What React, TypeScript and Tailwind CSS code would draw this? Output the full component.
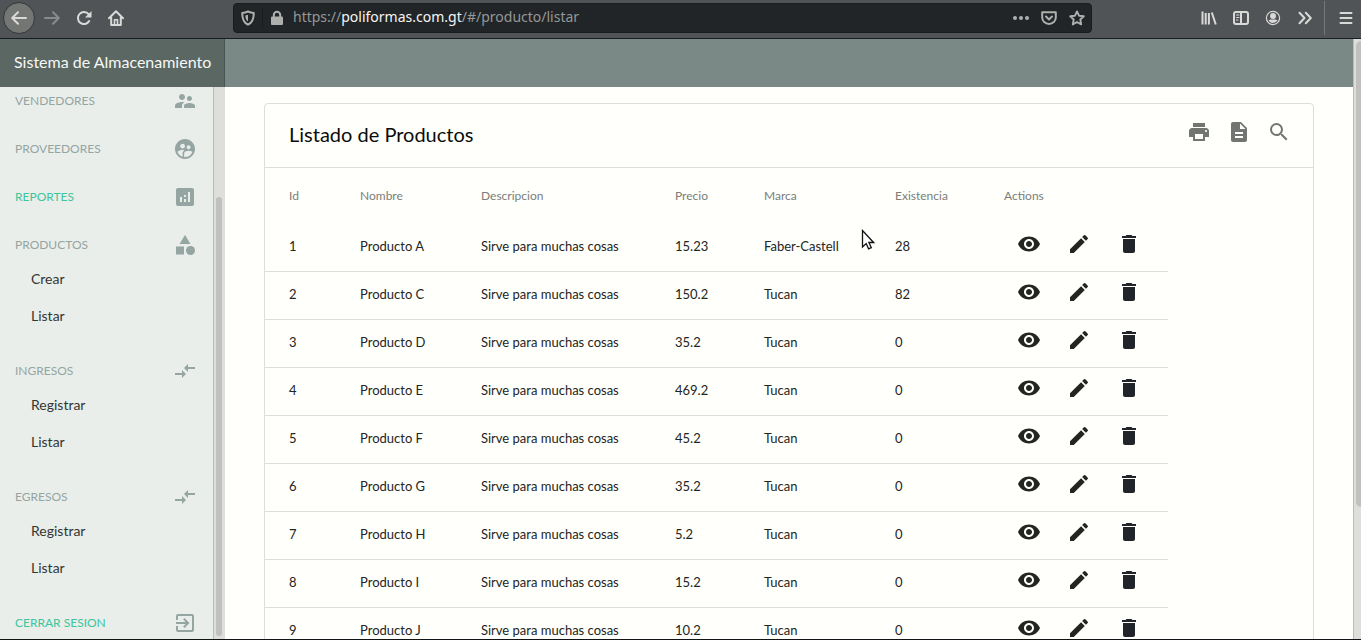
import React from "react";
import type { ComponentType, ReactNode } from "react";
import {
  MdAnalytics,
  MdCategory,
  MdCompareArrows,
  MdCreate,
  MdDelete,
  MdDescription,
  MdExitToApp,
  MdPrint,
  MdSearch,
  MdSupervisedUserCircle,
  MdSupervisorAccount,
  MdVisibility,
} from "react-icons/md";

type Icon = ComponentType<{ className?: string }>;

type Section = { title: string; icon: Icon; active?: boolean; links?: string[] };

const sections: Section[] = [
  { title: "VENDEDORES", icon: MdSupervisorAccount },
  { title: "PROVEEDORES", icon: MdSupervisedUserCircle },
  { title: "REPORTES", icon: MdAnalytics, active: true },
  { title: "PRODUCTOS", icon: MdCategory, links: ["Crear", "Listar"] },
  { title: "INGRESOS", icon: MdCompareArrows, links: ["Registrar", "Listar"] },
  { title: "EGRESOS", icon: MdCompareArrows, links: ["Registrar", "Listar"] },
  { title: "CERRAR SESION", icon: MdExitToApp, active: true },
];

type Product = { id: number; name: string; price: string; brand: string; stock: number };

const products: Product[] = [
  { id: 1, name: "Producto A", price: "15.23", brand: "Faber-Castell", stock: 28 },
  { id: 2, name: "Producto C", price: "150.2", brand: "Tucan", stock: 82 },
  { id: 3, name: "Producto D", price: "35.2", brand: "Tucan", stock: 0 },
  { id: 4, name: "Producto E", price: "469.2", brand: "Tucan", stock: 0 },
  { id: 5, name: "Producto F", price: "45.2", brand: "Tucan", stock: 0 },
  { id: 6, name: "Producto G", price: "35.2", brand: "Tucan", stock: 0 },
  { id: 7, name: "Producto H", price: "5.2", brand: "Tucan", stock: 0 },
  { id: 8, name: "Producto I", price: "15.2", brand: "Tucan", stock: 0 },
  { id: 9, name: "Producto J", price: "10.2", brand: "Tucan", stock: 0 },
];

const columns = [
  { label: "Id", width: "w-[71px]" },
  { label: "Nombre", width: "w-[121px]" },
  { label: "Descripcion", width: "w-[194px]" },
  { label: "Precio", width: "w-[89px]" },
  { label: "Marca", width: "w-[131px]" },
  { label: "Existencia", width: "w-[109px]" },
  { label: "Actions", width: "w-[188px]" },
];

function Glyph({ children, className = "" }: { children: ReactNode; className?: string }) {
  return (
    <svg
      viewBox="0 0 16 16"
      className={`size-4 shrink-0 ${className}`}
      fill="none"
      stroke="currentColor"
      strokeWidth="2"
      strokeLinecap="round"
      strokeLinejoin="round"
      aria-hidden="true"
    >
      {children}
    </svg>
  );
}

function BarButton({
  label,
  children,
  size = "size-8",
  className = "",
}: {
  label: string;
  children: ReactNode;
  size?: string;
  className?: string;
}) {
  return (
    <button
      type="button"
      aria-label={label}
      className={`flex shrink-0 items-center justify-center ${size} ${className}`}
    >
      {children}
    </button>
  );
}

function BrowserBar() {
  return (
    <div className="flex h-[39px] shrink-0 items-center border-b border-[#1b1e20] bg-[#505457] pb-[2px] pl-[3px] text-[#d9dad7]">
      <BarButton label="Atrás" className="rounded-full border border-[#333638] bg-[#737673]">
        <Glyph>
          <path d="M15 8H1.5M7 2.2 1.2 8 7 13.8" />
        </Glyph>
      </BarButton>
      <BarButton label="Adelante" className="ml-px text-[#888b8b]">
        <Glyph>
          <path d="M1 8h13.5M9 2.2 14.8 8 9 13.8" />
        </Glyph>
      </BarButton>
      <BarButton label="Recargar">
        <Glyph>
          <path d="M13.2 11A6 6 0 1 1 12.6 4.2" />
          <path d="M15.500 1v6.500H9z" fill="currentColor" stroke="none" />
        </Glyph>
      </BarButton>
      <BarButton label="Inicio">
        <Glyph>
          <path d="M1 8.2 8 1.3l7 6.9M3.2 7.5V15h9.6V7.5" />
          <path d="M6.5 15V9.8h3V15" strokeWidth="1.6" />
        </Glyph>
      </BarButton>

      <div className="ml-[101px] flex h-[30px] min-w-0 flex-1 items-center rounded border border-[#1a1d1f] bg-[#212528] text-[#aeb0ae]">
        <Glyph className="ml-[6px]">
          <path d="M8 1.5c2 .9 3.9 1.3 5.8 1.4 0 6-1 9.6-5.8 11.8C3.200 12.500 2.200 8.900 2.200 2.900 4.100 2.800 6 2.400 8 1.500z" />
          <path d="M8 4.700v6.800c-1.700-1.300-2.500-3.200-2.700-6.100z" fill="currentColor" stroke="none" />
        </Glyph>
        <span className="mx-[6px] h-5 w-px bg-[#1a1d1f]" />
        <Glyph>
          <rect x="2" y="6.500" width="12" height="8.500" rx="1" fill="currentColor" stroke="none" />
          <path d="M4.800 8V5a3.200 3.200 0 0 1 6.400 0v3" />
        </Glyph>
        <div className="relative ml-2 min-w-0 flex-1 pb-[2px]">
          <input
            type="text"
            aria-label="Dirección"
            className="absolute inset-0 w-full bg-transparent outline-none"
          />
          <span className="pointer-events-none block truncate font-['Noto_Sans',sans-serif] text-sm leading-5 text-[#959896]">
            https://<span className="text-[#f4f5f2]">poliformas.com.gt</span>/#/producto/listar
          </span>
        </div>
        <button type="button" aria-label="Más acciones" className="mr-3">
          <Glyph>
            <g fill="currentColor" stroke="none">
              <circle cx="2" cy="8" r="2" />
              <circle cx="8" cy="8" r="2" />
              <circle cx="14" cy="8" r="2" />
            </g>
          </Glyph>
        </button>
        <button type="button" aria-label="Guardar en Pocket" className="mr-3">
          <Glyph>
            <path d="M1.200 2.200h13.600v5.300a6.800 6.400 0 0 1-13.600 0zM5 6.500l3 3 3-3" />
          </Glyph>
        </button>
        <button type="button" aria-label="Marcador" className="mr-[6px]">
          <Glyph>
            <path d="m8 1.400 2 4.300 4.800.6-3.500 3.200.9 4.900L8 12l-4.200 2.400.9-4.900L1.200 6.300 6 5.700z" strokeWidth="1.900" />
          </Glyph>
        </button>
      </div>

      <BarButton label="Biblioteca" className="ml-[101px]">
        <Glyph>
          <path d="M1.500 1.500v13M4.700 3v11.500M7.900 3v11.500M10.800 2.500l4 12" strokeLinecap="butt" />
        </Glyph>
      </BarButton>
      <BarButton label="Barra lateral">
        <Glyph>
          <rect x="1" y="2" width="14" height="12" rx="2" />
          <path d="M8 2v12" />
          <path d="M3.500 5h2.500M3.500 7.500h2.500M3.500 10h1.500" strokeWidth="1" />
        </Glyph>
      </BarButton>
      <BarButton label="Cuenta">
        <Glyph>
          <circle cx="8" cy="8" r="6.600" strokeWidth="1.200" />
          <circle cx="8" cy="6" r="3" fill="currentColor" stroke="none" />
          <path d="M3.500 10.200c1.300 0 1.800-.7 2.500-.7h4c.7 0 1.200.7 2.500.7a5 5 0 0 1-9 0z" fill="currentColor" stroke="none" />
        </Glyph>
      </BarButton>
      <BarButton label="Más herramientas">
        <Glyph>
          <path d="M2.500 2.800 7.500 8l-5 5.200M8.800 2.800l5 5.200-5 5.200" />
        </Glyph>
      </BarButton>
      <span className="ml-[3px] h-[34px] w-px bg-[#74787a]" />
      <BarButton label="Menú" size="h-8 w-[30px]" className="ml-[6px]">
        <Glyph>
          <path d="M2.500 3h11M2.500 8h11M2.500 13h11" />
        </Glyph>
      </BarButton>
    </div>
  );
}

function Sidebar() {
  return (
    <aside className="flex w-[225px] shrink-0 bg-[#e9eeeb]">
      <nav className="flex min-w-0 flex-1 flex-col justify-end overflow-hidden">
        {sections.map(({ title, icon: SectionIcon, active, links }, i) => (
          <div
            key={title}
            className={`shrink-0 ${links ? "mb-5" : i < sections.length - 1 ? "mb-4" : ""}`}
          >
            <a
              href="#/"
              className={`flex h-8 items-center justify-between pr-4 pl-[15px] text-xs ${active ? "text-[#3dc59b]" : "text-[#95a5a2]"}`}
            >
              {title}
              <SectionIcon className="size-6 text-[#95a5a2]" />
            </a>
            {links?.map((link) => (
              <a key={link} href="#/" className="flex h-[37px] items-center pb-[2px] pl-[31px] text-sm text-[#333633]">
                {link}
              </a>
            ))}
          </div>
        ))}
      </nav>
      <div className="flex w-3 flex-col border-l border-[#b9bbb8] bg-[#dededb] pb-[3px] pl-[2px]">
        <div className="mt-auto h-4/5 w-[6px] rounded-full bg-[#c0c1bf]" />
      </div>
    </aside>
  );
}

function ActionButton({ label, icon: ActionIcon, className = "" }: { label: string; icon: Icon; className?: string }) {
  return (
    <button type="button" aria-label={label} className={`flex w-[50px] justify-center ${className}`}>
      <ActionIcon className="size-6" />
    </button>
  );
}

const cell = "border-b border-[#dcdedb] pl-6";

function ProductTable() {
  return (
    <table className="w-[903px] table-fixed border-separate border-spacing-0 text-left">
      <thead>
        <tr className="h-14">
          {columns.map((c) => (
            <th key={c.label} className={`${c.width} pl-6 text-xs font-normal text-[#7b7d7a]`}>
              {c.label}
            </th>
          ))}
        </tr>
      </thead>
      <tbody className="text-[13px] leading-5 text-[#232522]">
        {products.map((p) => (
          <tr key={p.id} className="h-12">
            <td className={`${cell} pb-[3px]`}>{p.id}</td>
            <td className={`${cell} pb-[3px]`}>{p.name}</td>
            <td className={`${cell} pb-[3px]`}>Sirve para muchas cosas</td>
            <td className={`${cell} pb-[3px]`}>{p.price}</td>
            <td className={`${cell} pb-[3px]`}>{p.brand}</td>
            <td className={`${cell} pb-[3px]`}>{p.stock}</td>
            <td className={`${cell} pb-[7px]`}>
              <div className="flex">
                <ActionButton label="Ver" icon={MdVisibility} />
                <ActionButton label="Editar" icon={MdCreate} />
                <ActionButton label="Eliminar" icon={MdDelete} className="text-[#212529]" />
              </div>
            </td>
          </tr>
        ))}
      </tbody>
    </table>
  );
}

export default function App() {
  return (
    <div className="flex h-screen flex-col overflow-hidden border-b border-[#111314] bg-[#fffffb] font-[Lato,sans-serif]">
      <BrowserBar />
      <div className="flex min-h-0 flex-1">
        <div className="flex min-w-0 flex-1 flex-col">
          <header className="flex h-12 shrink-0 bg-[#7a8986]">
            <div className="flex w-[225px] items-center border-r border-[#4a5451] bg-[#5b6763] pb-[2px] pl-[14px] text-base whitespace-nowrap text-[#f6f8f5]">
              Sistema de Almacenamiento
            </div>
          </header>
          <div className="flex min-h-0 flex-1">
            <Sidebar />
            <main className="min-w-0 flex-1 overflow-hidden px-[39px] pt-4">
              <section className="rounded border border-[#dcdedb]">
                <div className="flex h-16 items-center justify-between border-b border-[#dcdedb] pr-[22px] pl-6">
                  <h1 className="pb-1 text-xl text-[#0b0c0b]">Listado de Productos</h1>
                  <div className="mb-2 flex gap-4 text-[#737572]">
                    <button type="button" aria-label="Imprimir">
                      <MdPrint className="size-6" />
                    </button>
                    <button type="button" aria-label="Exportar">
                      <MdDescription className="size-6" />
                    </button>
                    <button type="button" aria-label="Buscar">
                      <MdSearch className="size-6" />
                    </button>
                  </div>
                </div>
                <ProductTable />
              </section>
            </main>
          </div>
        </div>
        <div className="flex w-2 shrink-0 flex-col border-l border-[#b9bbb8] bg-[#dededb] pt-[2px] pl-[2px]">
          <div className="h-[78%] rounded-l-full bg-[#c0c1bf]" />
        </div>
      </div>
      <svg
        viewBox="0 0 14 21"
        className="pointer-events-none absolute top-[229px] left-[861px] h-[21px] w-[14px]"
        aria-hidden="true"
      >
        <path
          d="M1.500 1.500v16.500l3.700-3.500 2.400 5.300 2.700-1.200-2.400-5.100h4.700z"
          fill="#fff"
          stroke="#111"
          strokeWidth="1.300"
        />
      </svg>
    </div>
  );
}
